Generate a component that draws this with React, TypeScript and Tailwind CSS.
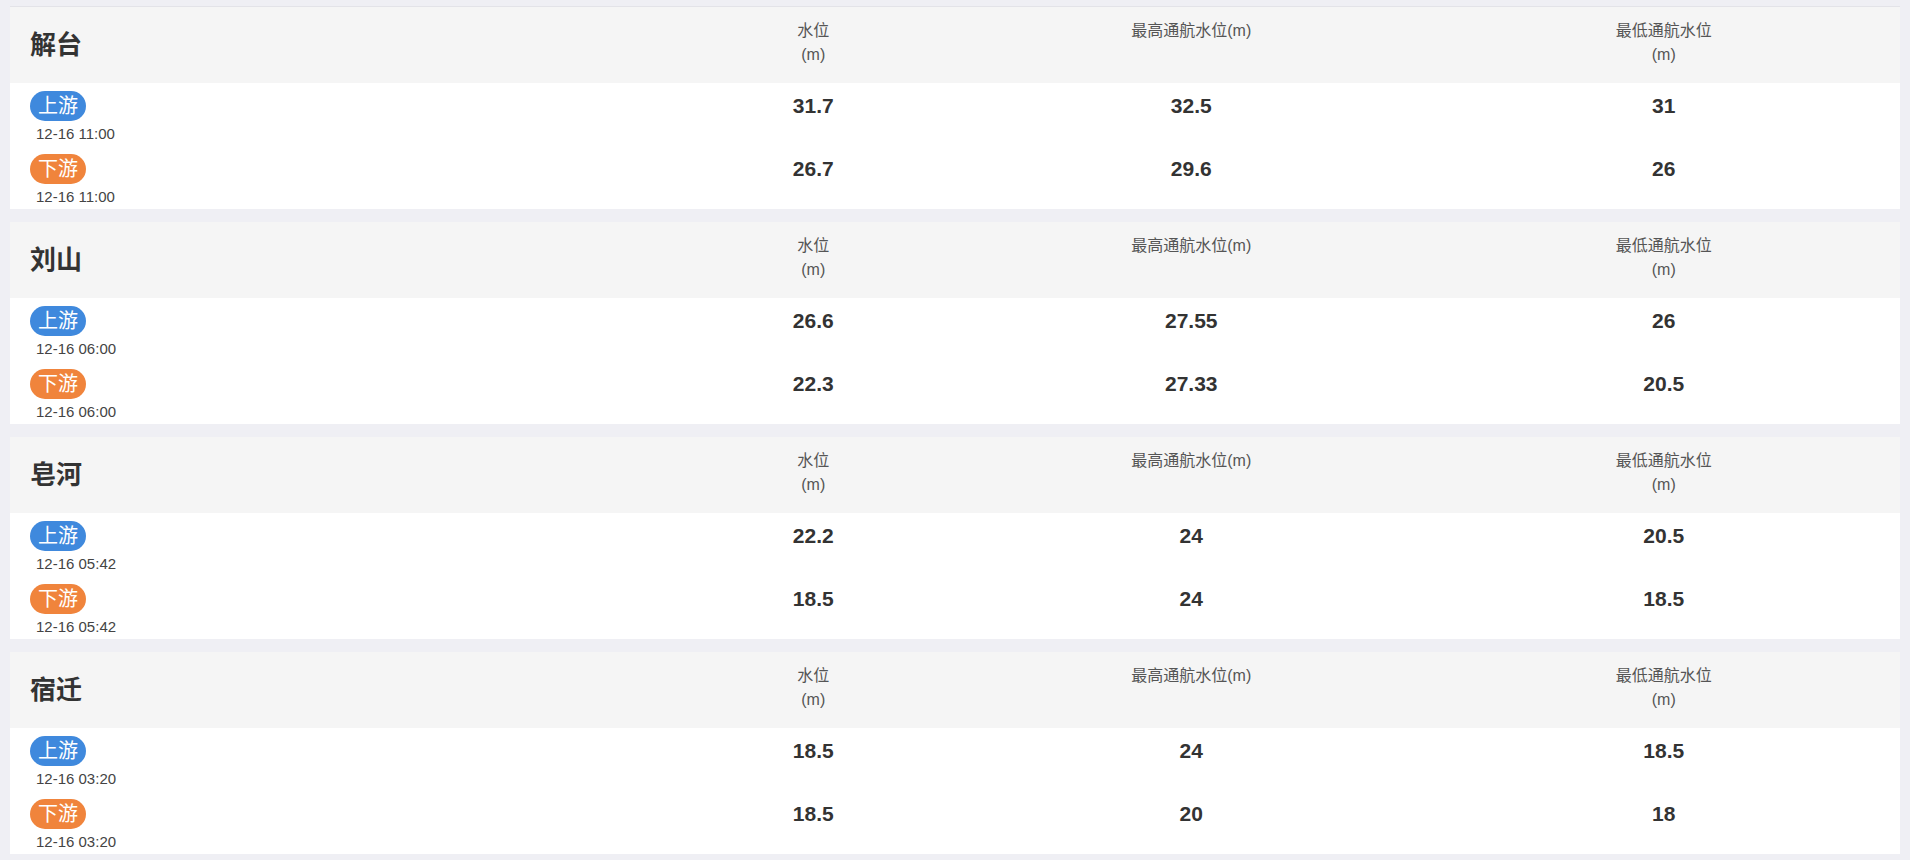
type Reading = { time: string; level: string; high: string; low: string };

type Station = { name: string; up: Reading; down: Reading };

const stations: Station[] = [
  {
    name: "解台",
    up: { time: "12-16 11:00", level: "31.7", high: "32.5", low: "31" },
    down: { time: "12-16 11:00", level: "26.7", high: "29.6", low: "26" },
  },
  {
    name: "刘山",
    up: { time: "12-16 06:00", level: "26.6", high: "27.55", low: "26" },
    down: { time: "12-16 06:00", level: "22.3", high: "27.33", low: "20.5" },
  },
  {
    name: "皂河",
    up: { time: "12-16 05:42", level: "22.2", high: "24", low: "20.5" },
    down: { time: "12-16 05:42", level: "18.5", high: "24", low: "18.5" },
  },
  {
    name: "宿迁",
    up: { time: "12-16 03:20", level: "18.5", high: "24", low: "18.5" },
    down: { time: "12-16 03:20", level: "18.5", high: "20", low: "18" },
  },
];

function Row({ label, reading, up }: { label: string; reading: Reading; up: boolean }) {
  return (
    <div className="grid grid-cols-[7fr_3fr_5fr_5fr] items-start">
      <div className="pl-5">
        <span
          className={
            "inline-block h-[30px] rounded-full px-2 text-[20px] leading-[30px] text-white " +
            (up ? "bg-[#3f89dd]" : "bg-[#f0843c]")
          }
        >
          {label}
        </span>
        <div className="mt-[3px] pl-[6px] text-[15px] leading-[20px] text-[#444]">{reading.time}</div>
      </div>
      <div className="text-center text-[21px] font-bold leading-[30px] text-[#333]">{reading.level}</div>
      <div className="text-center text-[21px] font-bold leading-[30px] text-[#333]">{reading.high}</div>
      <div className="text-center text-[21px] font-bold leading-[30px] text-[#333]">{reading.low}</div>
    </div>
  );
}

function StationCard({ station, first }: { station: Station; first: boolean }) {
  return (
    <div className={"bg-white " + (first ? "border-t border-[#e3e3e8]" : "")}>
      <div className="grid h-[76px] grid-cols-[7fr_3fr_5fr_5fr] bg-[#f5f5f5]">
        <div className="flex items-center pl-5 text-[26px] font-bold text-[#333]">{station.name}</div>
        <div className="pt-[12px] text-center text-[16px] leading-[24px] text-[#555]">
          水位
          <br />
          (m)
        </div>
        <div className="pt-[12px] text-center text-[16px] leading-[24px] text-[#555]">最高通航水位(m)</div>
        <div className="pt-[12px] text-center text-[16px] leading-[24px] text-[#555]">
          最低通航水位
          <br />
          (m)
        </div>
      </div>
      <div className="flex h-[126px] flex-col gap-[10px] pt-2">
        <Row label="上游" reading={station.up} up />
        <Row label="下游" reading={station.down} up={false} />
      </div>
    </div>
  );
}

export default function App() {
  return (
    <div
      className="min-h-screen bg-[#efeff4] px-[10px] pt-[6px] pb-4"
      style={{ fontFamily: '"Liberation Sans", Arial, "Noto Sans CJK SC", sans-serif' }}
    >
      <div className="flex flex-col gap-[13px]">
        {stations.map((s, i) => (
          <StationCard key={s.name} station={s} first={i === 0} />
        ))}
      </div>
    </div>
  );
}
